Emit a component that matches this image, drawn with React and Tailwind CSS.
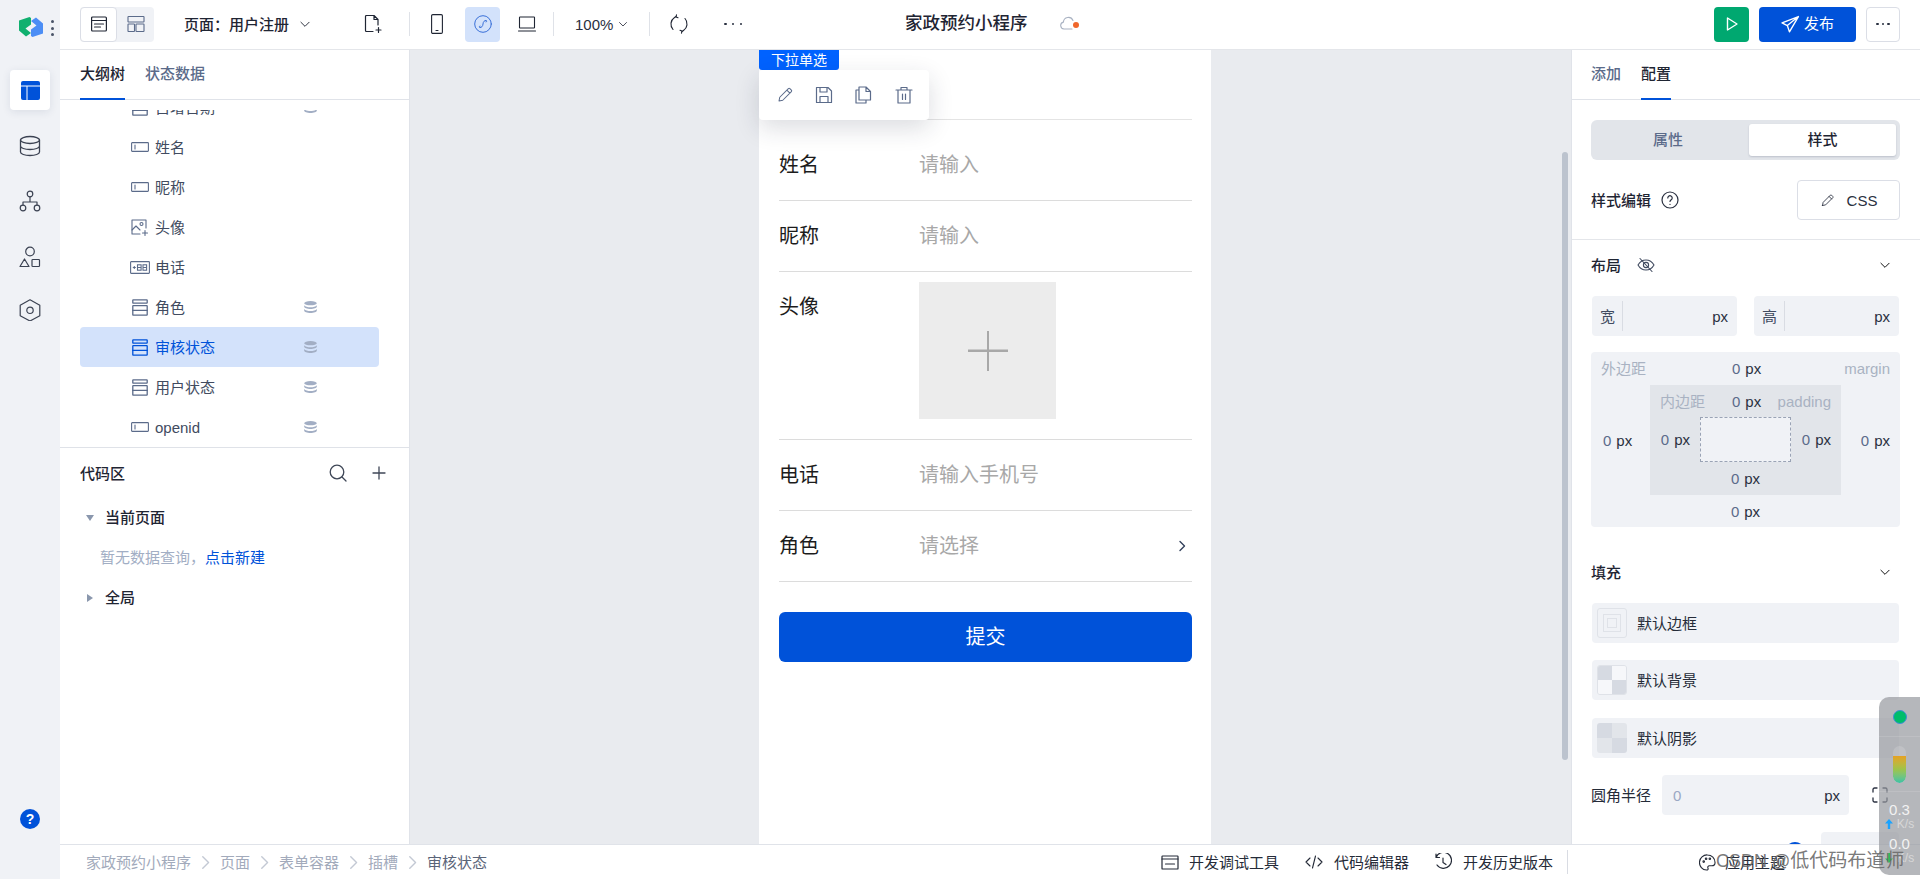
import React from "react";

const S = ({ size = 18, w, h, vb = "0 0 24 24", sw = 1.5, className = "", children, fill = "none" }) => (
  <svg width={w || size} height={h || size} viewBox={vb} fill={fill} stroke={fill === "none" ? "currentColor" : "none"} strokeWidth={sw} strokeLinecap="round" strokeLinejoin="round" className={"shrink-0 " + className}>
    {children}
  </svg>
);

const Chevron = ({ size = 14, className = "" }) => (
  <S size={size} sw={1.6} className={className}><path d="M5 9l7 7 7-7" /></S>
);
const Pencil = ({ size = 18, className = "" }) => (
  <S size={size} sw={1.4} className={className}><path d="M4 20l1-5L16.500 3.500a1.500 1.500 0 012 0l2 2a1.500 1.500 0 010 2L9 19l-5 1zM14.500 5.500l4 4" /></S>
);
const InputIcon = () => (
  <S w={18} h={10} vb="0 0 18 10" sw={1.1} className="text-[#5b6b8a]"><rect x=".6" y=".6" width="16.8" height="8.8" rx=".6" /><path d="M4 3v4" /></S>
);
const SelectIcon = ({ className = "text-[#5b6b8a]" }) => (
  <S w={16} h={17} vb="0 0 16 17" sw={1.3} className={className}><rect x=".8" y=".8" width="14.4" height="3.400" rx=".5" /><rect x=".8" y="6.600" width="14.400" height="9.600" rx=".5" /><path d="M.8 11.400h14.400" /></S>
);
const ImageIcon = () => (
  <S w={18} h={17} vb="0 0 18 17" sw={1.1} className="text-[#5b6b8a]"><path d="M9 15H1V1h14v8" /><path d="M1 11l4-4 4 4" /><circle cx="10.5" cy="5" r="1.5" /><path d="M14 11.500v5M11.500 14h5" /></S>
);
const PhoneTag = () => (
  <svg width="20" height="13" viewBox="0 0 20 13" className="shrink-0 text-[#5b6b8a]" fill="none" stroke="currentColor"><rect x=".6" y=".6" width="18.8" height="11.8" rx=".6" strokeWidth="1.1" /><path d="M2.800 6.500h3M4.300 5v3" strokeWidth="1" /><rect x="7.500" y="3.800" width="3.600" height="5.400" strokeWidth="1.100" /><path d="M7.500 6.500h3.600" strokeWidth="1" /><rect x="13" y="3.800" width="3.600" height="5.400" strokeWidth="1.100" /><path d="M13 6.500h3.600" strokeWidth="1" /></svg>
);
const DbSolid = () => (
  <svg width="13" height="12" viewBox="0 0 13 12" className="shrink-0" fill="#a2aec4"><ellipse cx="6.5" cy="2.2" rx="6.3" ry="2.1" /><path d="M.2 4.200c1 1.400 3.600 2 6.300 2s5.300-.6 6.300-2v1.600c0 1.200-2.800 2.200-6.300 2.200S.2 7 .2 5.800z" /><path d="M.2 8c1 1.400 3.600 2 6.300 2s5.300-.6 6.300-2v1.800c0 1.200-2.800 2.200-6.300 2.200S.2 11 .2 9.800z" /></svg>
);

const Row = ({ icon, label, db, active }) => (
  <div className={"flex h-10 shrink-0 items-center rounded-[4px] " + (active ? "bg-[#d3e2fb] text-[#0052d9]" : "text-[#414b60]")}>
    <div className="flex w-[71px] justify-end pr-[1px]"><div className="flex w-5 justify-center">{icon}</div></div>
    <span className="ml-[4px] w-[149px] text-[15px] leading-none">{label}</span>
    {db && <DbSolid />}
  </div>
);

const Rail = () => (
  <div className="flex w-[60px] shrink-0 flex-col items-center bg-[#f0f2f6] text-[#3b4252]">
    <div className="relative flex h-[70px] w-full shrink-0">
      <svg width="24" height="20" viewBox="0 0 24 20" className="ml-[19px] mt-[17px]">
        <path d="M10.500 0L0 3.500v10l7 6 5-3.500-5.500-4.500L12 7.500V1z" fill="#10b06f" />
        <path d="M13.500 20L24 16.500v-10L17 .5 12 4l5.500 4.500L12 12.500V19z" fill="#4c8ef5" />
      </svg>
      <div className="ml-[8px] mt-[20px] flex h-[16px] flex-col justify-between">
        <span className="h-[3px] w-[3px] rounded-full bg-[#4a5468]" />
        <span className="h-[3px] w-[3px] rounded-full bg-[#4a5468]" />
        <span className="h-[3px] w-[3px] rounded-full bg-[#4a5468]" />
      </div>
    </div>
    <div className="flex h-10 w-10 items-center justify-center rounded-[4px] bg-white shadow-[0_2px_8px_rgba(30,50,90,0.1)]">
      <svg width="19" height="19" viewBox="0 0 19 19"><rect width="19" height="19" rx="2" fill="#0052d9" /><path d="M0 5h19M6 5v14" stroke="#fff" strokeWidth="1" /></svg>
    </div>
    <div className="mt-[16px] flex h-10 items-center">
      <S size={22} sw={1.3} vb="0 0 22 22"><ellipse cx="11" cy="5" rx="9.500" ry="3.500" /><path d="M1.500 5v12c0 2 4.200 3.500 9.500 3.500s9.500-1.500 9.500-3.500V5M1.500 11c0 2 4.200 3.500 9.500 3.500s9.500-1.500 9.500-3.500" /></S>
    </div>
    <div className="mt-[15px] flex h-10 items-center">
      <S size={22} sw={1.2} vb="0 0 22 22"><circle cx="11" cy="4" r="2.800" /><circle cx="4" cy="18" r="2.800" /><circle cx="18" cy="18" r="2.800" /><path d="M11 7v5M4 15v-3h14v3" /></S>
    </div>
    <div className="mt-[16px] flex h-10 items-center">
      <S size={22} sw={1.2} vb="0 0 22 22"><circle cx="11" cy="5.500" r="4.300" /><path d="M5.500 13l4.500 7.500H1z" /><rect x="13" y="13.500" width="7.500" height="7" rx=".8" /></S>
    </div>
    <div className="mt-[13px] flex h-10 items-center">
      <S size={22} sw={1.2} vb="0 0 22 22"><path d="M11 .8l9.800 5.400v10.600L11 22 1.200 16.800V6.200z" /><circle cx="11" cy="11.300" r="3.200" /></S>
    </div>
    <div className="mt-auto mb-[50px] flex h-5 w-5 items-center justify-center rounded-full bg-[#0052d9] text-[14px] font-bold leading-none text-white">?</div>
  </div>
);

const Sep = ({ className = "" }) => <div className={"h-6 w-px shrink-0 bg-[#dfe2e8] " + className} />;

const TopBar = () => (
  <div className="flex h-[50px] shrink-0 items-center border-b border-[#e4e6ea] bg-white pb-[1px] text-[#1f2533]">
    <div className="ml-5 flex h-[35px] w-[74px] rounded-[4px] bg-[#f0f2f6]">
      <div className="flex w-[37px] items-center justify-center rounded-[4px] border border-[#dbdee6] bg-white">
        <S size={16} sw={1.2} vb="0 0 16 16"><rect x=".6" y="1" width="14.800" height="14" rx="1" /><path d="M.6 4.500h14.800M3.500 8h9M3.500 11h6" /></S>
      </div>
      <div className="flex flex-1 items-center justify-center text-[#5b6b8a]">
        <S size={18} sw={1.1} vb="0 0 18 18"><rect x="1" y="1.500" width="16" height="5.500" rx=".6" /><rect x="1" y="9" width="6.500" height="7.500" rx=".6" /><rect x="9" y="9" width="8" height="7.500" rx=".6" /></S>
      </div>
    </div>
    <span className="ml-[30px] w-[106px] whitespace-nowrap text-[15px] font-medium leading-none">页面：用户注册</span>
    <Chevron size={14} className="ml-[8px]" />
    <S size={18} sw={1.2} vb="0 0 18 18" className="ml-[52px]"><path d="M9 16.500H2.500a1 1 0 01-1-1V1.500a1 1 0 011-1H10L14 4.500V10M10 .5v4h4M14.500 12.500v5M12 15h5" /></S>
    <Sep className="ml-[27px]" />
    <S w={12} h={20} vb="0 0 12 20" sw={1.1} className="ml-[21px]"><rect x=".6" y=".6" width="10.800" height="18.800" rx="1.200" /><path d="M5 16.500h2" /></S>
    <div className="ml-[22px] flex h-[35px] w-[35px] items-center justify-center rounded-[4px] bg-[#d3e2fb] text-[#3a70d8]">
      <S size={18} sw={1} vb="0 0 18 18"><circle cx="9" cy="9" r="8.300" /><path d="M6 12.500c1.800 0 2.700-1 3-3.500s1.200-3.500 3-3.500M6 12.500c-1 0-1-1.500 0-1.500M12 5.500c1 0 1 1.500 0 1.500" /></S>
    </div>
    <S w={18} h={18} vb="0 0 18 18" sw={1.1} className="ml-[18px]"><rect x="1.500" y="2" width="15" height="11" rx=".6" /><path d="M.5 16h17" /></S>
    <Sep className="ml-[17px]" />
    <span className="ml-[21px] w-[38px] whitespace-nowrap text-[15px] leading-none text-[#2a3040]">100%</span>
    <Chevron size={12} className="ml-[4px]" />
    <Sep className="ml-[20px]" />
    <S size={20} sw={1.1} vb="0 0 20 20" className="ml-[19px]"><path d="M4 15.500a8 8 0 011.500-12L7 2.500M16 4.500a8 8 0 01-1.500 12L13 17.500" /><path d="M7.500 .8L7 3l2 .8M12.500 19.200L13 17l-2-.8" /></S>
    <div className="ml-[35px] flex w-[18px] justify-between">
      <span className="h-[2.500px] w-[2.500px] rounded-full bg-[#2a3040]" />
      <span className="h-[2.500px] w-[2.500px] rounded-full bg-[#2a3040]" />
      <span className="h-[2.500px] w-[2.500px] rounded-full bg-[#2a3040]" />
    </div>
    <span className="ml-[163px] w-[122px] whitespace-nowrap text-[17.500px] font-medium leading-none">家政预约小程序</span>
    <div className="relative ml-[33px] h-[16px] w-[20px] text-[#a9b2c2]">
      <S w={18} h={14} vb="0 0 18 14" sw={1.1}><path d="M12 13H4a3.500 3.500 0 01-.6-6.900A5 5 0 0113 4.500" /></S>
      <span className="absolute left-[13px] top-[6px] h-[6px] w-[6px] rounded-full bg-[#f0672c]" />
    </div>
    <div className="ml-auto mr-5 flex h-[35px] items-center">
      <div className="flex h-[35px] w-[35px] items-center justify-center rounded-[4px] bg-[#00a870] text-white">
        <S size={16} sw={1.4} vb="0 0 16 16"><path d="M3.500 2l9.500 6-9.500 6z" /></S>
      </div>
      <div className="ml-[10px] flex h-[35px] w-[97px] items-center justify-center gap-[4px] rounded-[4px] bg-[#0052d9] text-[15px] text-white">
        <S size={19} sw={1.3} vb="0 0 18 18"><path d="M16.500 1.500L1 7.500l5 2.500 2 6zM6 10l10.500-8.500" /></S>发布
      </div>
      <div className="ml-[10px] flex h-[35px] w-[34px] items-center justify-center gap-[3px] rounded-[4px] border border-[#dbdee6]">
        <span className="h-[2.500px] w-[2.500px] rounded-full bg-[#2a3040]" />
        <span className="h-[2.500px] w-[2.500px] rounded-full bg-[#2a3040]" />
        <span className="h-[2.500px] w-[2.500px] rounded-full bg-[#2a3040]" />
      </div>
    </div>
  </div>
);

const LeftPanel = () => (
  <div className="flex w-[350px] shrink-0 flex-col border-r border-[#e0e3e9] bg-white">
    <div className="flex h-[50px] shrink-0 border-b border-[#e0e3e9] pl-5 text-[15px] font-medium">
      <div className="-mb-px flex w-[45px] items-center justify-center whitespace-nowrap border-b-2 border-[#0052d9] text-[#1f2533]">大纲树</div>
      <div className="ml-5 flex items-center text-[#5b6b8a]">状态数据</div>
    </div>
    <div className="mt-[10px] flex h-[338px] shrink-0 flex-col overflow-hidden border-b border-[#dfe2e8] pl-5 pr-[30px]">
      <div className="-mt-[23px]">
        <Row icon={<SelectIcon />} label="自增日期" db />
        <Row icon={<InputIcon />} label="姓名" />
        <Row icon={<InputIcon />} label="昵称" />
        <Row icon={<ImageIcon />} label="头像" />
        <Row icon={<PhoneTag />} label="电话" />
        <Row icon={<SelectIcon />} label="角色" db />
        <Row icon={<SelectIcon className="text-[#0052d9]" />} label="审核状态" db active />
        <Row icon={<SelectIcon />} label="用户状态" db />
        <Row icon={<InputIcon />} label="openid" db />
      </div>
    </div>
    <div className="flex h-[50px] shrink-0 items-center pl-5 pr-[23px] text-[#1f2533]">
      <span className="text-[15px] font-medium leading-none">代码区</span>
      <S size={18} sw={1.3} vb="0 0 18 18" className="ml-auto text-[#3f4757]"><circle cx="8" cy="8" r="6.800" /><path d="M13 13l4 4" /></S>
      <S size={14} sw={1.3} vb="0 0 14 14" className="ml-[25px] text-[#3f4757]"><path d="M7 1v12M1 7h12" /></S>
    </div>
    <div className="flex h-10 items-center pl-[26px] text-[15px] font-medium text-[#1f2533]">
      <span className="mr-[11px] h-0 w-0 border-x-[4px] border-t-[6px] border-x-transparent border-t-[#8a97ad]" />当前页面
    </div>
    <div className="flex h-10 items-center pl-[40px] text-[15px] text-[#a2aec4]">暂无数据查询，<span className="text-[#0052d9]">点击新建</span></div>
    <div className="flex h-10 items-center pl-[27px] text-[15px] font-medium text-[#1f2533]">
      <span className="mr-[12px] h-0 w-0 border-y-[4px] border-l-[6px] border-y-transparent border-l-[#8a97ad]" />全局
    </div>
  </div>
);

const FormRow = ({ label, children, className = "h-[71px] items-center", labelClass = "" }) => (
  <div className={"flex border-b border-[#dcdcdc] text-[20px] " + className}>
    <span className={"w-[140px] shrink-0 leading-none text-[#1c1c1c] " + labelClass}>{label}</span>
    {children}
  </div>
);
const Ph = ({ children }) => <span className="leading-none text-[#a8a8a8]">{children}</span>;

const Canvas = () => (
  <div className="flex min-w-0 flex-1 bg-[#e9ebef]">
    <div className="relative ml-[349px] flex w-[452px] shrink-0 flex-col bg-white pl-5 pr-[19px]">
      <div className="absolute left-0 top-0 flex h-5 w-20 items-center justify-center rounded-b-[3px] bg-[#0062ff] text-[14px] leading-none text-white">下拉单选</div>
      <div className="absolute left-0 top-5 flex h-[50px] w-[170px] items-center gap-[21px] rounded-[4px] bg-white pl-[17px] text-[#5b6b8a] shadow-[0_8px_24px_rgba(30,40,60,0.16)]">
        <Pencil size={18} />
        <S size={18} sw={1.2} vb="0 0 18 18"><path d="M1.500 1.500h11.500l3.500 3.500v11.500h-15zM5 1.500v4.500h7V1.500M5 16.500v-6h8v6" /></S>
        <S size={18} sw={1.2} vb="0 0 18 18"><path d="M5 1h7l4.500 4.500V14H5zM12 1v4.500h4.500M5 4H2v13h10v-3" /></S>
        <S size={18} sw={1.2} vb="0 0 18 18" className="ml-[2px]"><path d="M3 4.500v12.500h12V4.500M1 4h16M6 4V1.500h6V4M7.500 8v5.500M10.500 8v5.500" /></S>
      </div>
      <div className="h-[70px] shrink-0 border-b border-[#e4e4e4]" />
      <FormRow label="姓名" className="h-[81px] items-center pt-[9px]"><Ph>请输入</Ph></FormRow>
      <FormRow label="昵称"><Ph>请输入</Ph></FormRow>
      <FormRow label="头像" className="h-[168px] items-start pt-[10px]" labelClass="mt-[15px]">
        <div className="flex h-[137px] w-[137px] items-center justify-center bg-[#ececec] text-[#a8a8a8]">
          <svg width="40" height="40" viewBox="0 0 40 40" fill="currentColor"><rect y="18.500" width="40" height="2.500" /><rect x="19" width="2" height="40" /></svg>
        </div>
      </FormRow>
      <FormRow label="电话"><Ph>请输入手机号</Ph></FormRow>
      <FormRow label="角色">
        <Ph>请选择</Ph>
        <S size={12} sw={1.4} vb="0 0 12 12" className="ml-auto mr-[4px] text-[#33415c]"><path d="M4 1.500L8.500 6 4 10.500" /></S>
      </FormRow>
      <div className="mt-[30px] flex h-[50px] items-center justify-center rounded-[6px] bg-[#0052d9] text-[20px] text-white">提交</div>
    </div>
    <div className="ml-auto mr-[3px] mt-[102px] h-[608px] w-[6px] rounded-[3px] bg-[#bcc3ce]" />
  </div>
);

const Val = ({ className = "" }) => (
  <span className={"whitespace-nowrap text-[15px] leading-none " + className}><span className="text-[#5b6b8a]">0</span><span className="ml-[5px] text-[#2a3040]">px</span></span>
);

const Default = ({ swatch, label, className = "" }) => (
  <div className={"flex h-10 items-center rounded-[4px] bg-[#f0f2f6] pl-[5px] " + className}>
    {swatch}
    <span className="ml-[10px] text-[15px] leading-none text-[#252b38]">{label}</span>
  </div>
);

const Checker = ({ a, b, border }) => (
  <div className={"grid h-[30px] w-[30px] grid-cols-2 grid-rows-2 overflow-hidden rounded-[3px] " + (border ? "border border-[#dfe2e8]" : "")}>
    <div className={a} /><div className={b} /><div className={b} /><div className={a} />
  </div>
);

const SizeInput = ({ label }) => (
  <div className="flex h-10 w-[145px] items-center rounded-[4px] bg-[#f0f2f6] pl-2 pr-[9px] text-[15px] leading-none">
    <span className="text-[#414b60]">{label}</span>
    <div className="ml-[7px] h-[30px] w-px bg-[#d9dce3]" />
    <span className="ml-auto text-[#2a3040]">px</span>
  </div>
);

const RightPanel = () => (
  <div className="flex w-[349px] shrink-0 flex-col overflow-hidden border-l border-[#e0e3e9] bg-white">
    <div className="flex h-[50px] shrink-0 border-b border-[#e0e3e9] pl-[19px] text-[15px] font-medium">
      <div className="flex items-center text-[#5b6b8a]">添加</div>
      <div className="-mb-px ml-5 flex items-center border-b-2 border-[#0052d9] text-[#1f2533]">配置</div>
    </div>
    <div className="ml-[19px] mr-5 mt-5 flex h-10 shrink-0 items-center rounded-[6px] bg-[#e2e5ea] pl-1 pr-1 text-[15px] font-medium">
      <div className="flex flex-1 items-center justify-center pr-2 text-[#5b6b8a]">属性</div>
      <div className="flex h-8 w-[147px] items-center justify-center rounded-[3px] bg-white text-[#1f2533] shadow-[0_1px_2px_rgba(40,50,80,0.2)]">样式</div>
    </div>
    <div className="mt-5 flex h-[60px] shrink-0 items-start border-b border-[#e4e6ea] pl-[19px] pr-5">
      <div className="flex h-10 items-center">
        <span className="text-[15px] font-medium leading-none text-[#1f2533]">样式编辑</span>
        <S size={18} sw={1.2} vb="0 0 18 18" className="ml-[10px] text-[#2a3040]"><circle cx="9" cy="9" r="8" /><path d="M6.800 7a2.200 2.200 0 114 1.200c-.8.700-1.800 1-1.800 2.300M9 13.300v.2" /></S>
      </div>
      <div className="ml-auto flex h-10 w-[103px] items-center justify-center gap-[12px] rounded-[4px] border border-[#dbdee6] text-[15px] leading-none text-[#2a3040]">
        <Pencil size={15} />CSS
      </div>
    </div>
    <div className="flex h-[56px] shrink-0 items-center pb-[6px] pl-[19px] pr-[28px]">
      <span className="text-[15px] font-medium leading-none text-[#1f2533]">布局</span>
      <S size={18} sw={1.1} vb="0 0 18 18" className="ml-[16px] text-[#414b60]"><path d="M1 9c2-3.500 5-5 8-5s6 1.500 8 5c-2 3.500-5 5-8 5s-6-1.500-8-5zM3 2.500l12 13" /><circle cx="9" cy="9" r="2.600" /></S>
      <Chevron size={14} className="ml-auto" />
    </div>
    <div className="flex shrink-0 justify-between pl-5 pr-[21px]">
      <SizeInput label="宽" />
      <SizeInput label="高" />
    </div>
    <div className="ml-[19px] mr-5 mt-4 flex h-[175px] shrink-0 flex-col rounded-[4px] bg-[#f0f2f6] text-[15px] leading-none">
      <div className="flex h-[33px] shrink-0 items-center px-[10px]">
        <span className="w-[131px] text-[#a9b2c2]">外边距</span><Val /><span className="ml-auto text-[#a9b2c2]">margin</span>
      </div>
      <div className="flex h-[110px] shrink-0">
        <div className="flex w-[59px] items-center pl-[12px]"><Val /></div>
        <div className="flex w-[191px] flex-col bg-[#e2e5ea]">
          <div className="flex h-[32px] items-center px-[10px]">
            <span className="w-[72px] text-[#a9b2c2]">内边距</span><Val /><span className="ml-auto text-[#a9b2c2]">padding</span>
          </div>
          <div className="flex h-[45px] items-center">
            <div className="flex w-[50px] justify-end pr-[10px]"><Val /></div>
            <div className="h-full w-[91px] border border-dashed border-[#9aa3b5] bg-[#f0f2f6]" />
            <div className="flex flex-1 justify-end pr-[10px]"><Val /></div>
          </div>
          <div className="flex h-[33px] items-center justify-center"><Val /></div>
        </div>
        <div className="flex flex-1 items-center justify-end pr-[10px]"><Val /></div>
      </div>
      <div className="flex flex-1 items-center justify-center"><Val /></div>
    </div>
    <div className="mt-[27px] flex h-[36px] shrink-0 items-center pl-[19px] pr-[28px]">
      <span className="text-[15px] font-medium leading-none text-[#1f2533]">填充</span>
      <Chevron size={14} className="ml-auto" />
    </div>
    <div className="flex shrink-0 flex-col pl-5 pr-[21px] pt-[13px]">
      <Default label="默认边框" swatch={
        <div className="flex h-[30px] w-[30px] items-center justify-center rounded-[3px] border border-[#dfe2e8]">
          <div className="flex h-[18px] w-[18px] items-center justify-center border border-[#dfe2e8]"><div className="h-[10px] w-[10px] border border-[#dfe2e8]" /></div>
        </div>} />
      <Default className="mt-[17px]" label="默认背景" swatch={<Checker a="bg-[#d6dae2]" b="bg-[#f6f7fa]" border />} />
      <Default className="mt-[18px]" label="默认阴影" swatch={<Checker a="bg-[#d6dae2]" b="bg-[#e2e5ea]" />} />
    </div>
    <div className="mt-[17px] flex h-10 shrink-0 items-center pl-[19px]">
      <span className="w-[71px] text-[15px] leading-none text-[#252b38]">圆角半径</span>
      <div className="flex h-10 w-[187px] items-center justify-between rounded-[4px] bg-[#f0f2f6] pl-[11px] pr-[9px] text-[15px] leading-none">
        <span className="text-[#9aa8c4]">0</span><span className="text-[#2a3040]">px</span>
      </div>
      <S size={16} sw={1.3} vb="0 0 16 16" className="ml-[23px] text-[#2a3040]"><path d="M1 5V2.500A1.500 1.500 0 012.500 1H5M11 1h2.500A1.500 1.500 0 0115 2.500V5M15 11v2.500a1.500 1.500 0 01-1.500 1.500H11M5 15H2.500A1.500 1.500 0 011 13.500V11" /></S>
    </div>
    <div className="mt-[17px] flex h-10 shrink-0 items-start">
      <span className="ml-[213px] mt-[10px] h-5 w-5 rounded-full bg-[#0052d9]" />
      <div className="ml-[16px] h-10 w-[78px] rounded-[4px] bg-[#f0f2f6]" />
    </div>
  </div>
);

const Crumb = () => (
  <span className="flex w-[29px] shrink-0 justify-center">
    <S size={13} sw={1.3} vb="0 0 12 12" className="text-[#c3c9d4]"><path d="M3.500 .8L8.800 6l-5.300 5.200" /></S>
  </span>
);

const BottomBar = () => (
  <div className="relative z-10 flex h-[35px] shrink-0 items-center border-t border-[#e0e3e9] bg-white text-[15px] leading-none text-[#252b38]">
    <div className="ml-[26px] flex w-[402px] items-center text-[#a2aabb]">
      <span className="w-[105px] whitespace-nowrap">家政预约小程序</span>
      <Crumb /><span className="w-[30px] whitespace-nowrap">页面</span>
      <Crumb /><span className="w-[60px] whitespace-nowrap">表单容器</span>
      <Crumb /><span className="w-[30px] whitespace-nowrap">插槽</span>
      <Crumb /><span className="whitespace-nowrap text-[#5a6478]">审核状态</span>
    </div>
    <S w={18} h={15} vb="0 0 18 15" sw={1.2} className="ml-[673px]"><rect x="1" y="1" width="16" height="13" rx=".6" /><path d="M1 4h16M4.500 9h9" /></S>
    <span className="ml-[10px] w-[91px] whitespace-nowrap">开发调试工具</span>
    <S w={18} h={16} vb="0 0 18 16" sw={1.1} className="ml-[25px]"><path d="M5 4L1 8l4 4M13 4l4 4-4 4M10.500 2L7.500 14" /></S>
    <span className="ml-[11px] w-[75px] whitespace-nowrap">代码编辑器</span>
    <S size={18} sw={1.2} vb="0 0 18 18" className="ml-[25px]"><path d="M2 4.500A8 8 0 113 12M9 5v4.500l3 2M2 1v3.500h3.500" /></S>
    <span className="ml-[11px] w-[91px] whitespace-nowrap">开发历史版本</span>
    <div className="ml-[13px] h-6 w-px bg-[#d9dce3]" />
    <S size={17} sw={1.2} vb="0 0 18 18" className="ml-[131px]"><path d="M9 1a8 8 0 00-1 16c1.500 0 2-1 1.500-2-.6-1.200.2-2.500 1.500-2.500h2.500C15.500 12.500 17 11 17 9c0-4.500-3.500-8-8-8z" /><circle cx="5" cy="8" r=".8" /><circle cx="7.500" cy="5" r=".8" /><circle cx="11.500" cy="5" r=".8" /></S>
    <span className="ml-[9px] whitespace-nowrap">应用主题</span>
  </div>
);

const Widget = () => (
  <div className="absolute right-0 top-[697px] z-20 flex h-[178px] w-[41px] flex-col items-center rounded-l-[10px] bg-[rgba(150,152,158,0.7)] text-white">
    <div className="flex h-10 w-full shrink-0 items-center justify-center border-b border-[rgba(255,255,255,0.12)] pl-[1px]">
      <span className="h-[14px] w-[14px] rounded-full border border-[#3f8fd6] bg-[#00bd6a]" />
    </div>
    <div className="flex h-[55px] w-full shrink-0 items-center justify-center border-b border-[rgba(255,255,255,0.12)]">
      <div className="flex h-[37px] w-[13px] flex-col justify-end overflow-hidden rounded-full bg-[rgba(255,255,255,0.15)]">
        <div className="h-[27px] rounded-b-full bg-gradient-to-b from-[#e5a122] via-[#9cc44a] to-[#34c3a5]" />
      </div>
    </div>
    <div className="mt-[10px] h-4 text-[15px] leading-[16px] text-[#f2f2f2]">0.3</div>
    <div className="flex h-3 items-center gap-[4px] text-[12px] leading-[12px] text-[#d8d8d8]">
      <svg width="8" height="10" viewBox="0 0 8 10" fill="#1aa3ff"><path d="M4 0l4 4.500H5.200V10H2.800V4.500H0z" /></svg><span>K/s</span>
    </div>
    <div className="mt-[6px] h-4 text-[15px] leading-[16px] text-[#f2f2f2]">0.0</div>
    <div className="flex h-3 items-center gap-[4px] text-[12px] leading-[12px] text-[#d8d8d8]">
      <svg width="8" height="10" viewBox="0 0 8 10" fill="#2fc25b"><path d="M4 10l4-4.500H5.200V0H2.800v5.500H0z" /></svg><span>K/s</span>
    </div>
  </div>
);

export default function App() {
  return (
    <div className="relative flex h-[879px] w-[1920px] overflow-hidden bg-white font-['Liberation_Sans','Noto_Sans_CJK_SC',sans-serif]">
      <Rail />
      <div className="flex min-w-0 flex-1 flex-col">
        <TopBar />
        <div className="flex min-h-0 flex-1">
          <LeftPanel />
          <Canvas />
          <RightPanel />
        </div>
        <BottomBar />
      </div>
      <Widget />
      <div className="absolute left-[1716px] top-[849px] z-30 whitespace-nowrap text-[19px] leading-[24px] text-[rgba(105,105,105,0.9)]"><span className="text-[18px]">CSDN @</span>低代码布道师</div>
    </div>
  );
}
